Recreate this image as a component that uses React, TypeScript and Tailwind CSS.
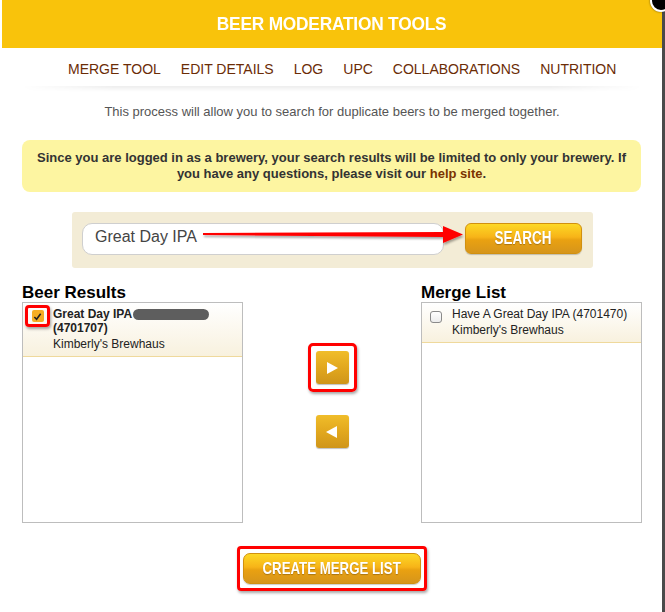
import { useState } from 'react';

const goldButton =
  'bg-[linear-gradient(180deg,#fdd825_0%,#f7b418_45%,#e9a111_55%,#d6951b_100%)] border border-[#d1900f] text-white font-bold shadow-[0_1px_1px_rgba(0,0,0,0.2)]';

const ArrowButton = ({ dir }: { dir: 'left' | 'right' }) => (
  <div className="flex h-[33px] w-[33px] items-center justify-center rounded-[3px] bg-[linear-gradient(180deg,#f0bd2a_0%,#e2a81e_50%,#cf951a_100%)] shadow-[0_1px_1px_rgba(0,0,0,0.25)]">
    <svg width="14" height="14" viewBox="0 0 14 14">
      {dir === 'right' ? (
        <polygon points="2,1 13,7 2,13" fill="#fff" />
      ) : (
        <polygon points="12,1 1,7 12,13" fill="#fff" />
      )}
    </svg>
  </div>
);

const App = () => {
  const [query] = useState('Great Day IPA');
  const nav = ['MERGE TOOL', 'EDIT DETAILS', 'LOG', 'UPC', 'COLLABORATIONS', 'NUTRITION'];

  return (
    <div className="relative flex h-[612px] w-[665px] overflow-hidden bg-white font-['Liberation_Sans',Arial,sans-serif]">
      <div className="ml-[2px] flex w-[660px] flex-col">
        {/* header */}
        <div className="flex h-[48px] items-center justify-center bg-[#f9c30b]">
          <span className="origin-center scale-x-[0.96] text-[18px] font-bold tracking-[-0.2px] text-white">
            BEER MODERATION TOOLS
          </span>
        </div>

        {/* tabs */}
        <div className="flex gap-[20px] pl-[66px] pt-[13px] text-[14px] leading-[16px] text-[#6b2c06]">
          {nav.map((n) => (
            <span key={n} className="cursor-pointer">
              {n}
            </span>
          ))}
        </div>
        <div className="mx-[20px] mt-[9px] h-[6px] bg-[linear-gradient(180deg,rgba(0,0,0,0.07),rgba(0,0,0,0))] [mask-image:linear-gradient(90deg,transparent,black_15%,black_85%,transparent)]" />

        <p className="mt-[12px] text-center text-[13px] leading-[16px] text-[#555]">
          This process will allow you to search for duplicate beers to be merged together.
        </p>

        {/* notice */}
        <div className="ml-[20px] mt-[20px] flex h-[52px] w-[619px] flex-col items-center justify-center rounded-[8px] bg-[#fdf5a1] text-center text-[13px] font-bold leading-[16px] text-[#333]">
          <div>
            Since you are logged in as a brewery, your search results will be limited to only your brewery. If
          </div>
          <div>
            you have any questions, please visit our{' '}
            <a className="text-[#7a3300]">help site</a>.
          </div>
        </div>

        {/* search */}
        <div className="relative ml-[70px] mt-[20px] flex h-[56px] w-[521px] items-start gap-[21px] rounded-[3px] bg-[#f3ecd6] pl-[10px] pt-[11px]">
          <div className="flex h-[32px] w-[362px] items-center rounded-[10px] border border-[#cfcfcf] bg-white pb-[5px] pl-[12px] text-[16px] text-[#444]">
            {query}
          </div>
          <div
            className={`${goldButton} flex h-[31px] w-[117px] items-center justify-center rounded-[6px]`}
          >
            <span className="scale-x-[0.75] text-[18px] [text-shadow:0_1px_1px_rgba(0,0,0,0.25)]">
              SEARCH
            </span>
          </div>
          <svg
            className="absolute left-[128px] top-[12px]"
            width="268"
            height="24"
            viewBox="0 0 268 24"
          >
            <defs>
              <filter id="sh" x="-5%" y="-50%" width="110%" height="200%">
                <feDropShadow dx="1" dy="2" stdDeviation="1.2" floodOpacity="0.35" />
              </filter>
            </defs>
            <polygon
              points="3,9 243,8 243,2 263,10.5 243,19 243,13 3,11"
              fill="#ff0000"
              filter="url(#sh)"
            />
          </svg>
        </div>

        {/* lists */}
        <div className="ml-[20px] mt-[16px] flex">
          <div className="flex w-[221px] flex-col">
            <h3 className="text-[17px] font-bold leading-[18px] text-black">Beer Results</h3>
            <div className="h-[221px] border border-[#bdbdbd]">
              <div className="flex h-[54px] gap-[3px] border-b border-[#efd99c] bg-[linear-gradient(180deg,#ffffff,#f8f1de)] pl-[2px] pt-[2px] text-[12px] leading-[14px] text-[#222]">
                <div className="flex h-[22px] w-[25px] shrink-0 items-center justify-center rounded-[4px] border-[3px] border-[#ff0000] shadow-[1px_2px_3px_rgba(0,0,0,0.35)]">
                  <div className="flex h-[12px] w-[12px] items-center justify-center rounded-[2px] bg-[#f5ae24]">
                    <svg width="9" height="9" viewBox="0 0 10 10">
                      <path d="M1.5 5.5 L4 8 L8.5 2" stroke="#222" strokeWidth="1.8" fill="none" />
                    </svg>
                  </div>
                </div>
                <div className="pt-[2px]">
                  <div className="flex items-center font-bold">
                    Great Day IPA
                    <span className="ml-[1px] inline-block h-[11px] w-[76px] rounded-full bg-[#5e5e5e] blur-[0.6px]" />
                  </div>
                  <div className="font-bold">(4701707)</div>
                  <div className="mt-[2px]">Kimberly's Brewhaus</div>
                </div>
              </div>
            </div>
          </div>

          <div className="flex w-[178px] flex-col items-center pt-[59px]">
            <div className="rounded-[5px] border-[3px] border-[#ff0000] p-[5px] shadow-[1px_2px_3px_rgba(0,0,0,0.35)]">
              <ArrowButton dir="right" />
            </div>
            <div className="mt-[23px]">
              <ArrowButton dir="left" />
            </div>
          </div>

          <div className="flex w-[221px] flex-col">
            <h3 className="text-[17px] font-bold leading-[18px] text-black">Merge List</h3>
            <div className="h-[221px] border border-[#bdbdbd]">
              <div className="flex h-[40px] gap-[10px] border-b border-[#efd99c] bg-[linear-gradient(180deg,#ffffff,#f8f1de)] pl-[8px] pt-[3px] text-[12px] leading-[16px] text-[#222]">
                <div className="mt-[5px] h-[12px] w-[12px] shrink-0 rounded-[3px] border border-[#8a8a8a] bg-[linear-gradient(180deg,#fff,#ececec)]" />
                <div>
                  <div>Have A Great Day IPA (4701470)</div>
                  <div>Kimberly's Brewhaus</div>
                </div>
              </div>
            </div>
          </div>
        </div>

        {/* create */}
        <div className="mt-[23px] flex justify-center">
          <div className="rounded-[4px] border-[3px] border-[#ff0000] px-[3px] py-[4px] shadow-[1px_2px_3px_rgba(0,0,0,0.35)]">
            <div
              className={`${goldButton} flex h-[31px] w-[178px] items-center justify-center rounded-[7px]`}
            >
              <span className="whitespace-nowrap scale-x-[0.78] text-[17px] [text-shadow:0_1px_1px_rgba(0,0,0,0.25)]">
                CREATE MERGE LIST
              </span>
            </div>
          </div>
        </div>
      </div>
      <div className="w-[3px] bg-[#4a4a4a]" />

      {/* close */}
      <div className="absolute right-[-7px] top-[-10px] h-[22px] w-[22px] rounded-full border-2 border-white bg-black shadow-[0_0_2px_rgba(0,0,0,0.6)]" />
    </div>
  );
};

export default App;
